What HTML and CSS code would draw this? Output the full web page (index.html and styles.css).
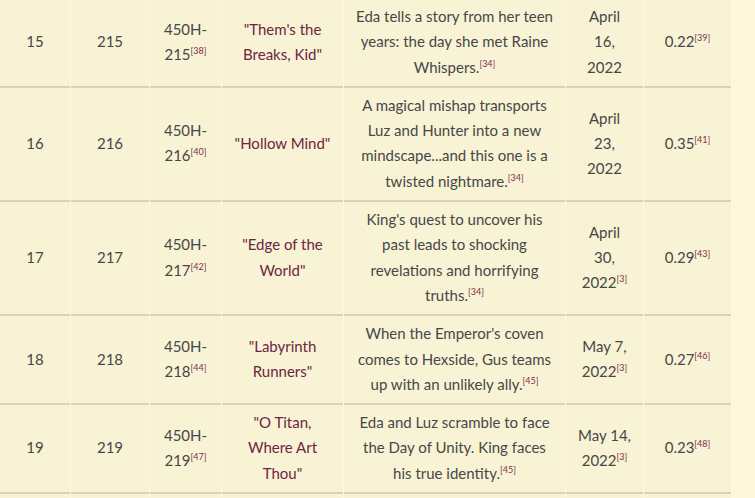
FILE: index.html
```html
<!DOCTYPE html>
<html>
<head>
<meta charset="utf-8">
<link rel="stylesheet" href="styles.css">
</head>
<body>
<table class="episodes">
<colgroup>
<col class="c-no"><col class="c-ep"><col class="c-code"><col class="c-title"><col class="c-desc"><col class="c-date"><col class="c-view">
</colgroup>
<tbody>
<tr>
<td>15</td><td>215</td><td>450H-215<sup class="ref">[38]</sup></td>
<td><a class="title">"Them's the Breaks, Kid"</a></td>
<td>Eda tells a story from her teen years: the day she met Raine Whispers.<sup class="ref">[34]</sup></td>
<td class="date">April 16, 2022</td>
<td>0.22<sup class="ref">[39]</sup></td>
</tr>
<tr>
<td>16</td><td>216</td><td>450H-216<sup class="ref">[40]</sup></td>
<td><a class="title">"Hollow Mind"</a></td>
<td>A magical mishap transports Luz and Hunter into a new mindscape...and this one is a twisted nightmare.<sup class="ref">[34]</sup></td>
<td class="date">April 23, 2022</td>
<td>0.35<sup class="ref">[41]</sup></td>
</tr>
<tr>
<td>17</td><td>217</td><td>450H-217<sup class="ref">[42]</sup></td>
<td><a class="title">"Edge of the World"</a></td>
<td>King's quest to uncover his past leads to shocking revelations and horrifying truths.<sup class="ref">[34]</sup></td>
<td class="date">April 30, 2022<sup class="ref">[3]</sup></td>
<td>0.29<sup class="ref">[43]</sup></td>
</tr>
<tr>
<td>18</td><td>218</td><td>450H-218<sup class="ref">[44]</sup></td>
<td><a class="title">"Labyrinth Runners"</a></td>
<td>When the Emperor's coven comes to Hexside, Gus teams up with an unlikely ally.<sup class="ref">[45]</sup></td>
<td class="date">May 7, 2022<sup class="ref">[3]</sup></td>
<td>0.27<sup class="ref">[46]</sup></td>
</tr>
<tr>
<td>19</td><td>219</td><td>450H-219<sup class="ref">[47]</sup></td>
<td><a class="title">"O Titan, Where Art Thou"</a></td>
<td>Eda and Luz scramble to face the Day of Unity. King faces his true identity.<sup class="ref">[45]</sup></td>
<td class="date">May 14, 2022<sup class="ref">[3]</sup></td>
<td>0.23<sup class="ref">[48]</sup></td>
</tr>
<tr class="next">
<td></td><td></td><td></td><td></td><td></td><td></td><td></td>
</tr>
</tbody>
</table>
</body>
</html>
```
FILE: styles.css
```css
html, body {
  margin: 0;
  padding: 0;
  background: #fdf8db;
}
body {
  font-family: Lato, "Open Sans", sans-serif;
  font-size: 15px;
  color: #474747;
  overflow: hidden;
}
.episodes {
  border-collapse: separate;
  border-spacing: 1px 0;
  table-layout: fixed;
  width: 727px;
  margin: -1px 0 0 -1px;
}
.c-no { width: 70px; }
.c-ep { width: 78px; }
.c-code { width: 71px; }
.c-title { width: 121px; }
.c-desc { width: 221px; }
.c-date { width: 77px; }
.c-view { width: 87px; }
.episodes td {
  background: #f8f3d5;
  border-bottom: 2px solid #dcd4ae;
  text-align: center;
  vertical-align: middle;
  line-height: 25.3px;
  padding: 5px 10px 6px;
}
.episodes td.date {
  padding-left: 12px;
  padding-right: 12px;
}
.title {
  color: #6e2442;
  text-decoration: none;
}
.ref {
  font-size: 9px;
  color: #7e2d49;
  line-height: 1;
  vertical-align: 6px;
}
.next td {
  height: 20px;
  padding: 0;
}
```
